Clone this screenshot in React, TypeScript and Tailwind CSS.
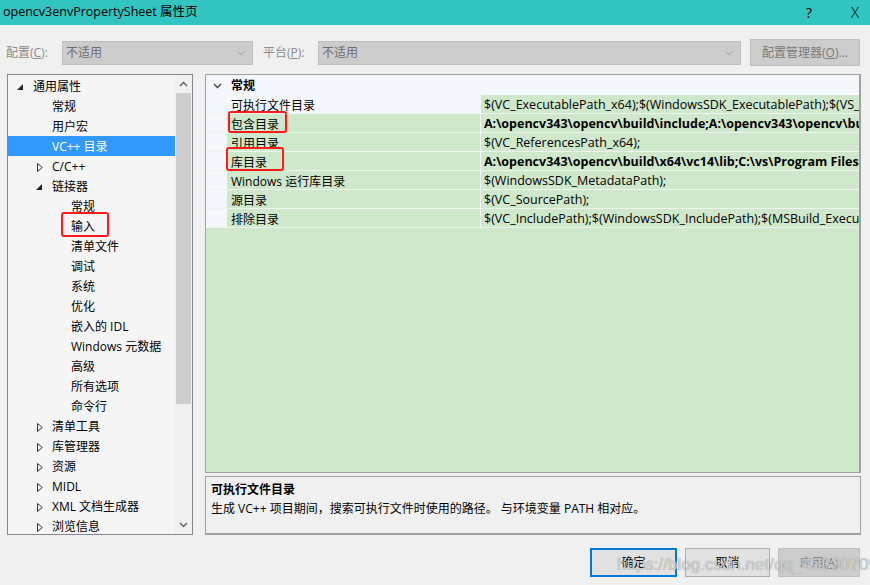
import React from "react";

type TreeItem = {
  label: string;
  level: 0 | 1 | 2;
  state?: "open" | "closed";
  selected?: boolean;
};

const tree: TreeItem[] = [
  { label: "通用属性", level: 0, state: "open" },
  { label: "常规", level: 1 },
  { label: "用户宏", level: 1 },
  { label: "VC++ 目录", level: 1, selected: true },
  { label: "C/C++", level: 1, state: "closed" },
  { label: "链接器", level: 1, state: "open" },
  { label: "常规", level: 2 },
  { label: "输入", level: 2 },
  { label: "清单文件", level: 2 },
  { label: "调试", level: 2 },
  { label: "系统", level: 2 },
  { label: "优化", level: 2 },
  { label: "嵌入的 IDL", level: 2 },
  { label: "Windows 元数据", level: 2 },
  { label: "高级", level: 2 },
  { label: "所有选项", level: 2 },
  { label: "命令行", level: 2 },
  { label: "清单工具", level: 1, state: "closed" },
  { label: "库管理器", level: 1, state: "closed" },
  { label: "资源", level: 1, state: "closed" },
  { label: "MIDL", level: 1, state: "closed" },
  { label: "XML 文档生成器", level: 1, state: "closed" },
  { label: "浏览信息", level: 1, state: "closed" },
];

const indent = ["pl-[10px]", "pl-[29px]", "pl-[48px]"];

const props = [
  {
    name: "可执行文件目录",
    value: "$(VC_ExecutablePath_x64);$(WindowsSDK_ExecutablePath);$(VS_ExecutablePath);$(MSBuild_ExecutablePath)",
    selected: true,
  },
  {
    name: "包含目录",
    value: "A:\\opencv343\\opencv\\build\\include;A:\\opencv343\\opencv\\build\\include\\opencv2;$(IncludePath)",
    bold: true,
  },
  { name: "引用目录", value: "$(VC_ReferencesPath_x64);" },
  {
    name: "库目录",
    value: "A:\\opencv343\\opencv\\build\\x64\\vc14\\lib;C:\\vs\\Program Files (x86)\\Windows Kits\\10\\Lib",
    bold: true,
  },
  { name: "Windows 运行库目录", value: "$(WindowsSDK_MetadataPath);" },
  { name: "源目录", value: "$(VC_SourcePath);" },
  {
    name: "排除目录",
    value: "$(VC_IncludePath);$(WindowsSDK_IncludePath);$(MSBuild_ExecutablePath);$(VC_LibraryPath_x64);",
  },
];

function Toggle({ state }: { state?: "open" | "closed" }) {
  if (state === "open")
    return (
      <svg width="6" height="6" viewBox="0 0 6 6" className="ml-[-1px]">
        <polygon points="6,0 6,6 0,6" fill="#262626" />
      </svg>
    );
  if (state === "closed")
    return (
      <svg width="6" height="9" viewBox="0 0 6 9">
        <polygon points="0.5,0.5 5.3,4.5 0.5,8.5" fill="none" stroke="#333" strokeWidth="1" />
      </svg>
    );
  return null;
}

function Combo() {
  return (
    <div className="h-[24px] bg-[#cccccc] border border-[#bfbfbf] flex items-center justify-between pl-[3px] pr-[6px] text-[#6d6d6d]">
      <span>不适用</span>
      <svg width="10" height="6" viewBox="0 0 10 6">
        <polyline points="1,1 5,5 9,1" fill="none" stroke="#a8a8a8" strokeWidth="1" />
      </svg>
    </div>
  );
}

export default function App() {
  return (
    <div className="relative w-[870px] h-[585px] bg-[#f0f0f0] flex flex-col overflow-hidden text-[12px] text-black font-['Open_Sans','Noto_Sans_CJK_SC',sans-serif]">
      {/* title bar */}
      <div className="h-[25px] bg-[#32c4c1] flex items-center pl-[3px] shrink-0">
        <span className="text-[12.5px] flex-1">opencv3envPropertySheet 属性页</span>
        <span className="text-[14px] w-[20px] text-center mr-[26px]">?</span>
        <span className="text-[15px] w-[20px] text-center mr-[5px] font-light">X</span>
      </div>

      {/* config row */}
      <div className="flex items-center h-[27px] mt-[14px] shrink-0 text-[#8a8a8a]">
        <span className="w-[62px] pl-[6px]">
          配置(<span className="underline">C</span>):
        </span>
        <div className="w-[191px]">
          <Combo />
        </div>
        <span className="w-[65px] pl-[10px]">
          平台(<span className="underline">P</span>):
        </span>
        <div className="w-[423px]">
          <Combo />
        </div>
        <div className="ml-[9px] w-[110px] h-[27px] bg-[#cccccc] border border-[#bfbfbf] flex items-center justify-center text-[#7a7a7a]">
          配置管理器(<span className="underline">O</span>)...
        </div>
      </div>

      {/* main area */}
      <div className="flex mt-[8px] shrink-0 h-[461px]">
        {/* tree */}
        <div className="ml-[7px] w-[186px] h-[461px] border border-[#828790] bg-[#f5f5f5] flex overflow-hidden">
          <div className="flex-1 pt-[1px] relative">
            {tree.map((t, i) => (
              <div
                key={i}
                className={`h-[20px] flex items-center pt-[2px] ${indent[t.level]} ${
                  t.selected ? "bg-[#3399ff] text-white" : ""
                }`}
              >
                <div className="w-[15px] flex items-center">
                  <Toggle state={t.state} />
                </div>
                <span className="whitespace-nowrap">{t.label}</span>
              </div>
            ))}
            <div className="absolute left-[53px] top-[137px] w-[48px] h-[25px] border-[2px] border-[#ff1a1a] rounded-[3px]" />
          </div>
          <div className="w-[17px] bg-[#f0f0f0] flex flex-col">
            <div className="h-[18px] flex items-center justify-center">
              <svg width="9" height="6" viewBox="0 0 9 6">
                <polyline points="1,5 4.5,1.5 8,5" fill="none" stroke="#606060" strokeWidth="1.4" />
              </svg>
            </div>
            <div className="h-[311px] mx-[1px] bg-[#cdcdcd]" />
            <div className="flex-1" />
            <div className="h-[18px] flex items-center justify-center">
              <svg width="9" height="6" viewBox="0 0 9 6">
                <polyline points="1,1 4.5,4.5 8,1" fill="none" stroke="#606060" strokeWidth="1.4" />
              </svg>
            </div>
          </div>
        </div>

        {/* right column */}
        <div className="ml-[12px] w-[656px] flex flex-col">
          <div className="h-[399px] border border-[#a0a0a0] border-r-2 bg-[#cfe8cc] overflow-hidden relative">
            <div className="h-[20px] bg-[#f4f7fc] flex items-center pt-[2px]">
              <div className="w-[21px] flex justify-center pl-[2px]">
                <svg width="9" height="6" viewBox="0 0 9 6">
                  <polyline points="1,1 4.5,4.5 8,1" fill="none" stroke="#444" strokeWidth="1.4" />
                </svg>
              </div>
              <span className="pl-[4px] font-bold">常规</span>
            </div>
            {props.map((p, i) => (
              <div key={i} className="h-[19px] flex border-b border-[#eef4ee]">
                <div className="w-[21px] bg-[#f4f7fc]" />
                <div
                  className={`w-[253px] pl-[4px] pt-[3px] flex items-center whitespace-nowrap ${
                    p.selected ? "bg-[#f4f7fc]" : ""
                  }`}
                >
                  {p.name}
                </div>
                <div className="w-[1px] bg-[#f4f7fc]" />
                <div
                  className={`flex-1 pl-[3px] pt-[3px] flex items-center whitespace-nowrap overflow-hidden text-[12.5px] ${
                    p.bold ? "font-bold" : ""
                  }`}
                >
                  {p.value}
                </div>
              </div>
            ))}
            <div className="absolute left-[22px] top-[36px] w-[59px] h-[22px] border-[2px] border-[#ff1a1a] rounded-[3px]" />
            <div className="absolute left-[20px] top-[72px] w-[58px] h-[24px] border-[2px] border-[#ff1a1a] rounded-[3px]" />
          </div>

          <div className="mt-[3px] h-[59px] border border-[#a0a0a0] border-b-2 bg-[#f0f0f0] pl-[5px] pt-[3px]">
            <div className="font-bold leading-[19px]">可执行文件目录</div>
            <div className="leading-[19px]">
              生成 VC++ 项目期间，搜索可执行文件时使用的路径。 与环境变量 PATH 相对应。
            </div>
          </div>
        </div>
      </div>

      {/* buttons */}
      <div className="flex mt-[13px] pl-[590px] gap-[8px] shrink-0">
        <div className="w-[87px] h-[29px] bg-[#e1e1e1] border-2 border-[#0078d7] flex items-center justify-center">
          确定
        </div>
        <div className="w-[85px] h-[29px] bg-[#e1e1e1] border border-[#adadad] flex items-center justify-center">
          取消
        </div>
        <div className="w-[82px] h-[29px] bg-[#cccccc] border border-[#bfbfbf] flex items-center justify-center text-[#8a8a8a]">
          应用(<span className="underline">A</span>)
        </div>
      </div>

      {/* watermark */}
      <div className="absolute left-[617px] top-[554px] text-[17px] leading-[22px] text-[#e4e4e4]/80 font-['Liberation_Sans',sans-serif] [text-shadow:0_0_1px_rgba(0,0,0,0.45)] whitespace-nowrap">
        https://blog.csdn.net/qq_43330709
      </div>
    </div>
  );
}
